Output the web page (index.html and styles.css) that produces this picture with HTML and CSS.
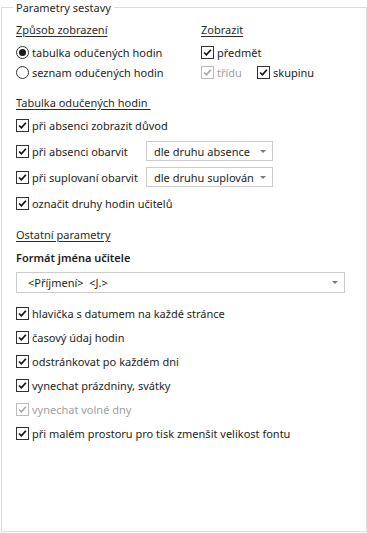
FILE: index.html
```html
<!DOCTYPE html>
<html lang="cs">
<head>
<meta charset="utf-8">
<link rel="stylesheet" href="styles.css">
</head>
<body>
<fieldset class="group">
  <legend class="group-title">Parametry sestavy</legend>
  <div class="top">
    <div class="col col-left">
      <div class="row head"><span class="u">Způsob zobrazení</span></div>
      <div class="row first"><span class="radio on"></span><span>tabulka odučených hodin</span></div>
      <div class="row"><span class="radio"></span><span>seznam odučených hodin</span></div>
    </div>
    <div class="col col-right">
      <div class="row head"><span class="u">Zobrazit</span></div>
      <div class="row first"><span class="cb"><svg viewBox="0 0 13 13"><path d="M2.5 6.5 L5.2 9.2 L10.5 3.2" /></svg></span><span>předmět</span></div>
      <div class="row">
        <span class="cb dis"><svg viewBox="0 0 13 13"><path d="M2.5 6.5 L5.2 9.2 L10.5 3.2" /></svg></span><span class="dis-text short">třídu</span>
        <span class="cb"><svg viewBox="0 0 13 13"><path d="M2.5 6.5 L5.2 9.2 L10.5 3.2" /></svg></span><span>skupinu</span>
      </div>
    </div>
  </div>

  <div class="row head head2"><span class="u">Tabulka odučených hodin&nbsp;</span></div>
  <div class="rows26">
    <div class="row r26"><span class="cb"><svg viewBox="0 0 13 13"><path d="M2.5 6.5 L5.2 9.2 L10.5 3.2" /></svg></span><span>při absenci zobrazit důvod</span></div>
    <div class="row r26"><span class="cb"><svg viewBox="0 0 13 13"><path d="M2.5 6.5 L5.2 9.2 L10.5 3.2" /></svg></span><span class="lbl">při absenci obarvit</span><div class="combo small"><span class="combo-text">dle druhu absence</span><span class="arrow"></span></div></div>
    <div class="row r26"><span class="cb"><svg viewBox="0 0 13 13"><path d="M2.5 6.5 L5.2 9.2 L10.5 3.2" /></svg></span><span class="lbl">při suplovaní obarvit</span><div class="combo small"><span class="combo-text">dle druhu suplován</span><span class="arrow"></span></div></div>
    <div class="row r26"><span class="cb"><svg viewBox="0 0 13 13"><path d="M2.5 6.5 L5.2 9.2 L10.5 3.2" /></svg></span><span>označit druhy hodin učitelů</span></div>
  </div>

  <div class="row head head3"><span class="u">Ostatní parametry</span></div>
  <div class="row bold">Formát jména učitele</div>
  <div class="combo wide"><span class="combo-text">&lt;Příjmení&gt;&nbsp; &lt;J.&gt;</span><span class="arrow"></span></div>

  <div class="rows24">
    <div class="row r24"><span class="cb"><svg viewBox="0 0 13 13"><path d="M2.5 6.5 L5.2 9.2 L10.5 3.2" /></svg></span><span>hlavička s datumem na každé stránce</span></div>
    <div class="row r24"><span class="cb"><svg viewBox="0 0 13 13"><path d="M2.5 6.5 L5.2 9.2 L10.5 3.2" /></svg></span><span>časový údaj hodin</span></div>
    <div class="row r24"><span class="cb"><svg viewBox="0 0 13 13"><path d="M2.5 6.5 L5.2 9.2 L10.5 3.2" /></svg></span><span>odstránkovat po každém dni</span></div>
    <div class="row r24"><span class="cb"><svg viewBox="0 0 13 13"><path d="M2.5 6.5 L5.2 9.2 L10.5 3.2" /></svg></span><span>vynechat prázdniny, svátky</span></div>
    <div class="row r24"><span class="cb dis"><svg viewBox="0 0 13 13"><path d="M2.5 6.5 L5.2 9.2 L10.5 3.2" /></svg></span><span class="dis-text">vynechat volné dny</span></div>
    <div class="row r24"><span class="cb"><svg viewBox="0 0 13 13"><path d="M2.5 6.5 L5.2 9.2 L10.5 3.2" /></svg></span><span>při malém prostoru pro tisk zmenšit velikost fontu</span></div>
  </div>
</fieldset>
</body>
</html>
```

FILE: styles.css
```css
html, body {
  margin: 0;
  padding: 0;
  background: #ffffff;
}
body {
  width: 367px;
  height: 533px;
  font-family: "Noto Sans", "Open Sans", sans-serif;
  font-size: 11px;
  color: #1e1e1e;
  overflow: hidden;
}
.group {
  margin: 0 0 0 1px;
  width: 366px;
  height: 532px;
  box-sizing: border-box;
  border: 1px solid #dcdcdc;
  padding: 0 14px 0 14px;
  display: flex;
  flex-direction: column;
}
.group-title {
  margin-left: -3px;
  padding: 0 3px;
  line-height: 16px;
  height: 14px;
  color: #2a2a2a;
}
.top {
  display: flex;
  padding-top: 5px;
}
.col {
  display: flex;
  flex-direction: column;
}
.col-left {
  width: 185px;
}
.row {
  display: flex;
  align-items: center;
  height: 20px;
  white-space: nowrap;
}
.row.first {
  margin-top: 3px;
}
.head {
  color: #2b2b2b;
}
.u {
  text-decoration: underline;
  text-underline-offset: 2px;
}
.head2 {
  margin-top: 10px;
}
.r26 {
  height: 26px;
}
.head3 {
  margin-top: 8px;
}
.bold {
  margin-top: 3px;
  font-weight: 600;
}
.r24 {
  height: 24px;
}
.rows24 {
  margin-top: 8px;
}
.radio {
  width: 13px;
  height: 13px;
  box-sizing: border-box;
  border: 1px solid #333333;
  border-radius: 50%;
  margin-right: 3px;
  flex: none;
  display: flex;
  align-items: center;
  justify-content: center;
}
.radio.on::after {
  content: "";
  width: 7px;
  height: 7px;
  border-radius: 50%;
  background: #1a1a1a;
}
.cb {
  width: 13px;
  height: 13px;
  box-sizing: border-box;
  border: 1px solid #333333;
  margin-right: 3px;
  flex: none;
  display: block;
}
.cb svg {
  display: block;
  width: 11px;
  height: 11px;
  margin: 0;
}
.cb svg path {
  fill: none;
  stroke: #111111;
  stroke-width: 2;
}
.cb.dis {
  border-color: #bcbcbc;
}
.cb.dis svg path {
  stroke: #a8a8a8;
}
.short {
  width: 40px;
}
.dis-text {
  color: #a0a0a0;
}
.lbl {
  width: 114px;
}
.combo {
  box-sizing: border-box;
  border: 1px solid #cccccc;
  background: #ffffff;
  display: flex;
  align-items: center;
  height: 20px;
  color: #1e1e1e;
}
.combo.small {
  width: 127px;
  padding: 0 0 0 7px;
}
.combo-text {
  flex: 1;
  overflow: hidden;
}
.arrow {
  width: 0;
  height: 0;
  border-left: 3px solid transparent;
  border-right: 3px solid transparent;
  border-top: 3px solid #7a7a7a;
  margin: 0 6px 0 4px;
}
.combo.wide {
  width: 329px;
  height: 21px;
  margin-top: 5px;
  padding-left: 11px;
}
```
